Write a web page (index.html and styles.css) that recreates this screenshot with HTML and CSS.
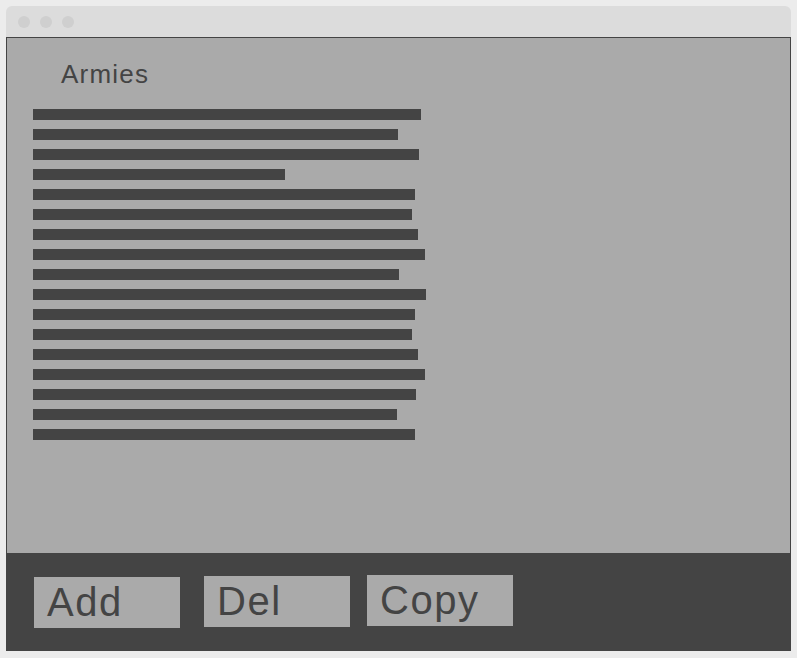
FILE: index.html
```html
<!DOCTYPE html>
<html>
<head>
<meta charset="utf-8">
<link rel="stylesheet" href="styles.css">
</head>
<body>
<div class="window">
  <div class="titlebar">
    <span class="dot"></span><span class="dot"></span><span class="dot"></span>
  </div>
  <div class="content">
    <h1 class="title">Armies</h1>
    <div class="list">
      <div class="bar" style="width:388px"></div>
      <div class="bar" style="width:365px"></div>
      <div class="bar" style="width:386px"></div>
      <div class="bar" style="width:252px"></div>
      <div class="bar" style="width:382px"></div>
      <div class="bar" style="width:379px"></div>
      <div class="bar" style="width:385px"></div>
      <div class="bar" style="width:392px"></div>
      <div class="bar" style="width:366px"></div>
      <div class="bar" style="width:393px"></div>
      <div class="bar" style="width:382px"></div>
      <div class="bar" style="width:379px"></div>
      <div class="bar" style="width:385px"></div>
      <div class="bar" style="width:392px"></div>
      <div class="bar" style="width:383px"></div>
      <div class="bar" style="width:364px"></div>
      <div class="bar" style="width:382px"></div>
    </div>
  </div>
  <div class="toolbar">
    <div class="btn btn-add">Add</div>
    <div class="btn btn-del">Del</div>
    <div class="btn btn-copy">Copy</div>
  </div>
</div>
</body>
</html>
```
FILE: styles.css
```css
html, body {
  margin: 0;
  padding: 0;
  background: #ececec;
  font-family: "Liberation Sans", Arial, sans-serif;
}
.window {
  margin: 6px 0 0 6px;
  width: 785px;
  background: #dcdcdc;
  border-radius: 6px 6px 0 0;
}
.titlebar {
  height: 31px;
  display: flex;
  align-items: center;
  gap: 10px;
  padding-left: 12px;
  box-sizing: border-box;
}
.dot {
  width: 12px;
  height: 12px;
  border-radius: 50%;
  background: #cfcfcf;
}
.content {
  height: 516px;
  box-sizing: border-box;
  background: #aaaaaa;
  border: 1px solid #444444;
  border-bottom: none;
  padding: 21px 0 0 26px;
}
.title {
  margin: 0 0 20px 28px;
  font-size: 26px;
  letter-spacing: 1.2px;
  font-weight: normal;
  line-height: 30px;
  color: #444444;
}
.list {
  display: flex;
  flex-direction: column;
  gap: 9px;
}
.bar {
  height: 11px;
  background: #444444;
}
.toolbar {
  height: 98px;
  background: #444444;
  display: flex;
  align-items: flex-start;
  padding-left: 28px;
}
.btn {
  width: 146px;
  height: 51px;
  box-sizing: border-box;
  background: #aaaaaa;
  color: #444444;
  font-size: 40px;
  letter-spacing: 1.5px;
  line-height: 46px;
  padding: 2px 0 0 13px;
}
.btn-add { margin-top: 24px; }
.btn-del { margin-top: 23px; margin-left: 24px; }
.btn-copy { margin-top: 22px; margin-left: 17px; }
```
